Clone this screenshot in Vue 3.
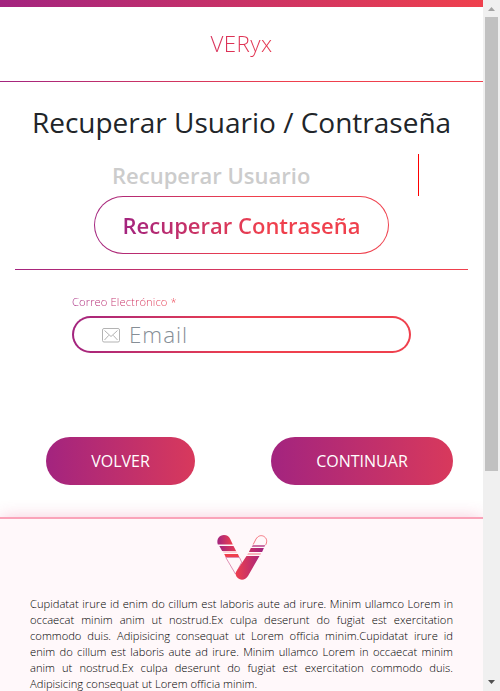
<script setup>
const legal = 'Cupidatat irure id enim do cillum est laboris aute ad irure. Minim ullamco Lorem in occaecat minim anim ut nostrud.Ex culpa deserunt do fugiat est exercitation commodo duis. Adipisicing consequat ut Lorem officia minim.'
</script>

<template>
  <div class="window">
    <div class="page">
      <div class="topbar"></div>
      <header class="header"><span class="brand">VERyx</span></header>
      <main class="main">
        <h1 class="title">Recuperar Usuario / Contraseña</h1>
        <div class="tabs">
          <div class="tab-row">
            <span class="tab">Recuperar Usuario</span>
            <span class="divider"></span>
          </div>
          <div class="tab-active"><span class="tab-label">Recuperar Contraseña</span></div>
        </div>
        <form class="form" @submit.prevent>
          <label class="label" for="email">Correo Electrónico *</label>
          <div class="field">
            <svg class="mail" viewBox="0 0 18 15" fill="none" stroke="#b3b3b3">
              <rect x=".5" y=".5" width="17" height="13.5" rx="1.5" />
              <path d="M2.5 2.5 9 8.5l6.5-6M2.5 12 6.8 7.3M15.500 12 11.200 7.300" />
            </svg>
            <input id="email" class="input" type="text" placeholder="Email" />
          </div>
        </form>
        <div class="actions">
          <button class="btn back">VOLVER</button>
          <button class="btn next">CONTINUAR</button>
        </div>
      </main>
      <footer class="footer">
        <svg class="logo" viewBox="0 0 50 45">
          <defs>
            <linearGradient id="lg" x1="0" x2="1"><stop stop-color="#a3247f" /><stop offset="1" stop-color="#ef404d" /></linearGradient>
            <linearGradient id="rg" gradientUnits="userSpaceOnUse" x1="18" x2="46" y1="0" y2="0"><stop stop-color="#ef404d" /><stop offset="1" stop-color="#a3247f" /></linearGradient>
            <linearGradient id="sg" gradientUnits="userSpaceOnUse" x1="2" x2="22" y1="0" y2="0"><stop stop-color="#a3247f" /><stop offset="1" stop-color="#ef404d" /></linearGradient>
          </defs>
          <path d="M.8 9.500C-1 4 2.500 0 7 0c3 0 5 1.500 6.200 4l2.600 5.500Z" fill="url(#lg)" />
          <path d="M2.300 11h14.200l2.600 5H5.100Z" fill="url(#sg)" />
          <path d="M5.600 16h13.500l1 2H6.600Z" fill="#ef404d" opacity=".2" />
          <path d="M7.200 19h13.700l1.400 3H8.600Z" fill="#ef404d" />
          <path d="M8.800 22.500 18.500 39l6.200-11.800-2.200-4.700Z" fill="none" stroke="#c84b87" stroke-width=".6" />
          <path d="M36.200 9.500 39 4C41 .8 44 0 46.500 1.200c3 1.600 4 4.600 2.500 8l-.4.800" fill="none" stroke="#ef404d" stroke-width=".7" />
          <path d="M35.800 10h12.600l-1 2H34.700Z" fill="#b02a79" opacity=".65" />
          <path d="M33.900 13h13l-1.800 4H31.900Z" fill="url(#rg)" />
          <path d="M31.200 18h13l-.9 2H30.200Z" fill="#ef404d" opacity=".35" />
          <path d="M29.500 21h13L31 41c-3 5.500-11 4.500-12.300-1.200-.2-1.600.3-2.800 1.100-4Z" fill="url(#rg)" />
        </svg>
        <p class="legal">{{ legal + legal }}</p>
      </footer>
    </div>
    <div class="scrollbar">
      <svg class="arrow" viewBox="0 0 17 17"><path d="M5 11h7L8.500 7Z" fill="#a3a3a3" /></svg>
      <div class="thumb"></div>
      <svg class="arrow" viewBox="0 0 17 17"><path d="M5 6h7l-3.500 4Z" fill="#505050" /></svg>
    </div>
  </div>
</template>

<style>
body { margin: 0; overflow: hidden; background: #fff; }
</style>

<style scoped>
* { box-sizing: border-box; }
.window { display: flex; width: 500px; height: 691px; overflow: hidden; font-family: "Open Sans", sans-serif; color: #212529; }
.page { width: 483px; height: 691px; overflow: hidden; }
.topbar { height: 7px; background: linear-gradient(90deg, #a3247f, #ef404d); }
.header { height: 75px; display: flex; justify-content: center; border-bottom: 1px solid; border-image: linear-gradient(90deg, #a3247f, #ef404d 60%) 1; }
.brand { font-size: 22.4px; letter-spacing: .4px; font-weight: 300; line-height: 73px; background: linear-gradient(90deg, #d8305a, #e5374f); background-clip: text; color: transparent; }
.main { height: 435px; padding: 23px 15px 0; }
.title { margin: 0; text-align: center; font-size: 28px; font-weight: 400; line-height: 34px; white-space: nowrap; }
.tabs { height: 116px; margin-top: 15px; border-bottom: 1px solid; border-image: linear-gradient(90deg, #a3247f, #ef404d 70%) 1; }
.tab-row { display: flex; justify-content: space-between; height: 42px; padding: 0 49px 0 97px; }
.tab { font-size: 22px; font-weight: 600; line-height: 43px; color: #ccc; }
.divider { width: 1px; height: 42px; background: red; }
.tab-active { display: flex; justify-content: center; width: 295px; height: 58px; margin-left: 79px; border: 1px solid transparent; border-radius: 29px; background: linear-gradient(#fff, #fff) padding-box, linear-gradient(90deg, #a3247f, #ef404d 50%) border-box; }
.tab-label { height: 56px; font-size: 22px; font-weight: 600; line-height: 56px; background: linear-gradient(90deg, #a3247f, #ef404d 60%); background-clip: text; color: transparent; }
.form { display: flex; flex-direction: column; align-items: flex-start; padding: 24px 57px 0; }
.label { font-size: 11.2px; letter-spacing: .1px; font-weight: 300; line-height: 16px; background: linear-gradient(90deg, #a3247f, #ef404d); background-clip: text; color: transparent; }
.field { display: flex; align-items: center; width: 339px; height: 37px; margin-top: 6px; padding-left: 28px; border: 2px solid transparent; border-radius: 19px; background: linear-gradient(#fff, #fff) padding-box, linear-gradient(90deg, #a3247f, #ef404d 50%) border-box; }
.mail { width: 18px; height: 15px; margin-top: 2px; }
.input { width: 250px; margin-left: 9px; padding: 0; border: 0; outline: 0; background: transparent; font: 300 22.4px/30px "Open Sans", sans-serif; letter-spacing: 1px; }
.input::placeholder { color: #868e96; opacity: 1; }
.actions { display: flex; justify-content: space-between; margin-top: 84px; padding: 0 15px 0 31px; }
.btn { height: 48px; padding: 0; border: 0; border-radius: 24px; background: linear-gradient(90deg, #a3247f, #d8395c); color: #fff; font: 400 16px/48px "Open Sans", sans-serif; }
.back { width: 149px; }
.next { width: 182px; }
.footer { height: 174px; padding: 16px 30px 0; border-top: 2px solid #faa3b9; background: #fff8fa; box-shadow: 0 0 16px -1px rgba(225, 60, 120, .3); }
.logo { display: block; width: 50px; height: 45px; margin: 0 auto 16px 187px; overflow: visible; }
.legal { margin: 0; width: 423px; font-size: 11.2px; line-height: 16px; font-weight: 300; color: #000; text-align: justify; }
.scrollbar { display: flex; flex-direction: column; width: 17px; height: 691px; background: #f0f0f0; }
.arrow { width: 17px; height: 17px; flex: none; }
.thumb { width: 13px; height: 454px; margin: 0 2px auto; background: #c1c1c1; }
</style>
